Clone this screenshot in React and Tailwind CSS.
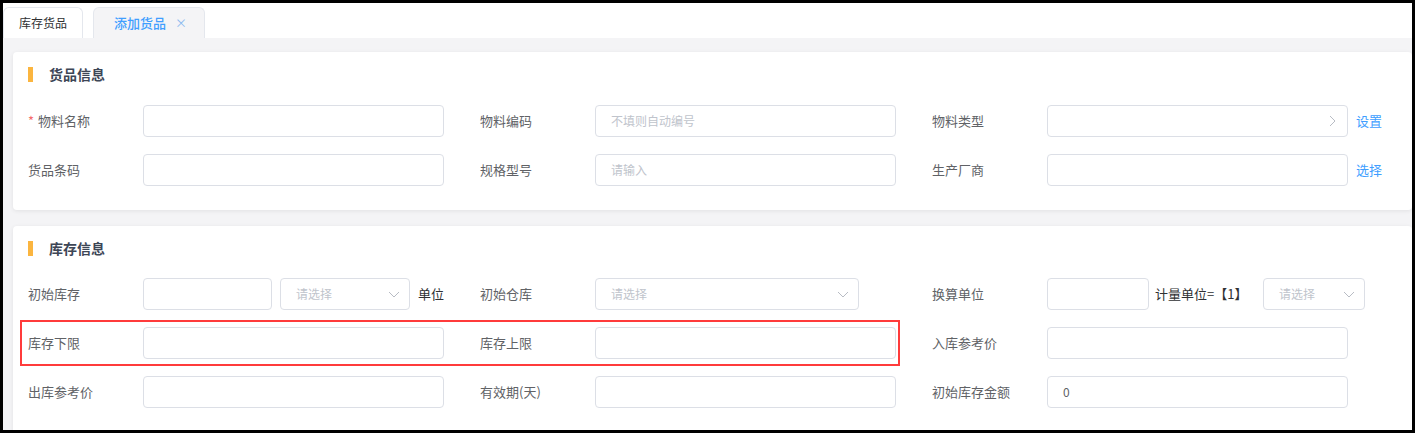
import React from "react";

const font = { fontFamily: '"Noto Sans CJK SC", "Noto Sans", sans-serif' };

function Chevron({ dir = "down" }) {
  return (
    <svg width="14" height="14" viewBox="0 0 14 14" className="text-[#b8bcc4]">
      {dir === "down" ? (
        <path d="M2 5l5 5 5-5" fill="none" stroke="currentColor" strokeWidth="1" />
      ) : (
        <path d="M5 2l5 5-5 5" fill="none" stroke="currentColor" strokeWidth="1" />
      )}
    </svg>
  );
}

function Input({ w = "w-[301px]", placeholder, value, arrow }) {
  return (
    <div
      className={`${w} h-[32px] shrink-0 rounded-[4px] border border-[#dcdfe6] bg-white flex items-center pl-[15px] pr-[8px] text-[12px]`}
    >
      <span className={`flex-1 ${value ? "text-[#606266]" : "text-[#c0c4cc]"}`}>
        {value || placeholder}
      </span>
      {arrow && <Chevron dir={arrow} />}
    </div>
  );
}

function Label({ children, req }) {
  return (
    <div className="w-[115px] shrink-0 text-[13px] text-[#606266]">
      {req && <span className="text-[#f56c6c] mr-[4px]">*</span>}
      {children}
    </div>
  );
}

function Field({ label, req, children }) {
  return (
    <div className="w-[452px] shrink-0 flex items-center">
      <Label req={req}>{label}</Label>
      {children}
    </div>
  );
}

function Card({ title, children, className = "" }) {
  return (
    <div className={`bg-white rounded-[4px] shadow-[0_1px_4px_rgba(0,0,0,0.08)] pl-[15px] ${className}`}>
      <div className="flex items-center h-[44px]">
        <div className="w-[5px] h-[15px] bg-[#fbb53f]" />
        <div className="ml-[16px] text-[14px] font-bold text-[#3d4656]">{title}</div>
      </div>
      {children}
    </div>
  );
}

export default function App() {
  return (
    <div
      style={font}
      className="w-[1415px] h-[433px] border-[3px] border-black bg-white overflow-hidden box-border"
    >
      {/* tabs */}
      <div className="flex items-end h-[35px] gap-[10px]">
        <div className="w-[80px] h-[31px] rounded-t-[6px] border border-b-0 border-[#e4e7ed] bg-white flex items-center justify-center text-[12px] text-[#303133]">
          库存货品
        </div>
        <div className="w-[112px] h-[31px] rounded-t-[6px] border border-b-0 border-[#e4e7ed] bg-[#f4f4f6] flex items-center pl-[20px] text-[13px] text-[#409eff] font-medium">
          添加货品
          <span className="ml-[9px] text-[12px] text-[#8ab8f0] font-normal">×</span>
        </div>
      </div>

      {/* content */}
      <div className="bg-[#f4f4f6] h-full pl-[10px] pt-[14px]">
        <Card title="货品信息" className="h-[158px]">
          <div className="flex flex-col gap-[17px] pt-[9px]">
            <div className="flex">
              <Field label="物料名称" req>
                <Input />
              </Field>
              <Field label="物料编码">
                <Input placeholder="不填则自动编号" />
              </Field>
              <Field label="物料类型">
                <Input arrow="right" />
                <span className="ml-[8px] text-[13px] text-[#409eff]">设置</span>
              </Field>
            </div>
            <div className="flex">
              <Field label="货品条码">
                <Input />
              </Field>
              <Field label="规格型号">
                <Input placeholder="请输入" />
              </Field>
              <Field label="生产厂商">
                <Input />
                <span className="ml-[8px] text-[13px] text-[#409eff]">选择</span>
              </Field>
            </div>
          </div>
        </Card>

        <Card title="库存信息" className="mt-[16px] h-[220px]">
          <div className="flex flex-col gap-[17px] pt-[8px]">
            <div className="flex">
              <Field label="初始库存">
                <Input w="w-[129px]" />
                <div className="ml-[8px]">
                  <Input w="w-[130px]" placeholder="请选择" arrow="down" />
                </div>
                <span className="ml-[8px] text-[13px] text-[#303133]">单位</span>
              </Field>
              <Field label="初始仓库">
                <Input w="w-[264px]" placeholder="请选择" arrow="down" />
              </Field>
              <Field label="换算单位">
                <Input w="w-[102px]" />
                <span className="ml-[6px] text-[13px] text-[#303133] w-[108px]">计量单位=【1】</span>
                <Input w="w-[102px]" placeholder="请选择" arrow="down" />
              </Field>
            </div>
            <div className="flex relative">
              <div className="absolute left-[-8px] top-[-7px] w-[880px] h-[46px] border-2 border-[#ff3b3b]" />
              <Field label="库存下限">
                <Input />
              </Field>
              <Field label="库存上限">
                <Input />
              </Field>
              <Field label="入库参考价">
                <Input />
              </Field>
            </div>
            <div className="flex">
              <Field label="出库参考价">
                <Input />
              </Field>
              <Field label="有效期(天)">
                <Input />
              </Field>
              <Field label="初始库存金额">
                <Input value="0" />
              </Field>
            </div>
          </div>
        </Card>
      </div>
    </div>
  );
}
